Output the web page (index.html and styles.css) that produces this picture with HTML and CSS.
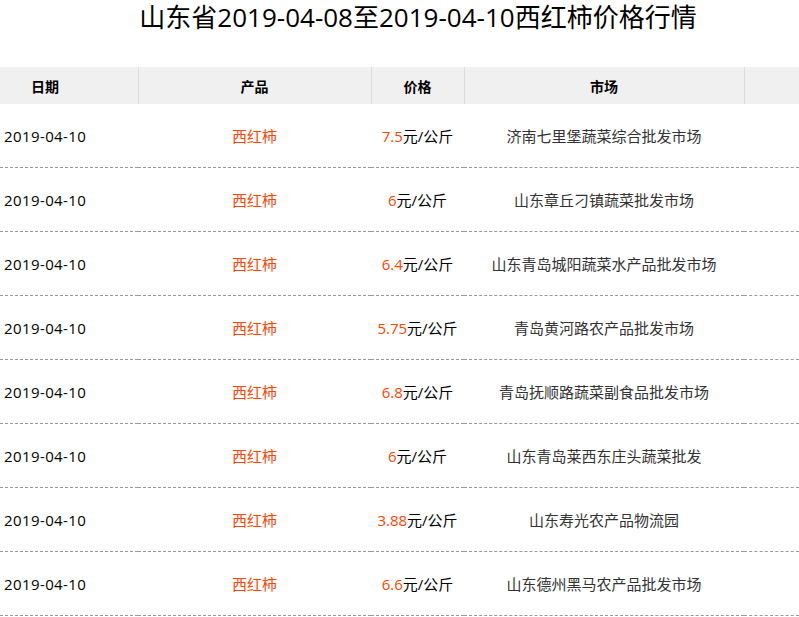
FILE: index.html
```html
<!DOCTYPE html>
<html lang="zh-CN">
<head>
<meta charset="utf-8">
<title>山东省西红柿价格行情</title>
<link rel="stylesheet" href="styles.css">
</head>
<body>
<h1 class="title">山东省2019-04-08至2019-04-10西红柿价格行情</h1>
<table class="price-table">
  <colgroup>
    <col class="c-date"><col class="c-prod"><col class="c-price"><col class="c-market"><col class="c-extra">
  </colgroup>
  <thead>
    <tr>
      <th class="th-date">日期</th>
      <th>产品</th>
      <th>价格</th>
      <th>市场</th>
      <th></th>
    </tr>
  </thead>
  <tbody>
    <tr><td class="date">2019-04-10</td><td class="prod">西红柿</td><td class="price"><span class="num">7.5</span>元/公斤</td><td class="market">济南七里堡蔬菜综合批发市场</td><td></td></tr>
    <tr><td class="date">2019-04-10</td><td class="prod">西红柿</td><td class="price"><span class="num">6</span>元/公斤</td><td class="market">山东章丘刁镇蔬菜批发市场</td><td></td></tr>
    <tr><td class="date">2019-04-10</td><td class="prod">西红柿</td><td class="price"><span class="num">6.4</span>元/公斤</td><td class="market">山东青岛城阳蔬菜水产品批发市场</td><td></td></tr>
    <tr><td class="date">2019-04-10</td><td class="prod">西红柿</td><td class="price"><span class="num">5.75</span>元/公斤</td><td class="market">青岛黄河路农产品批发市场</td><td></td></tr>
    <tr><td class="date">2019-04-10</td><td class="prod">西红柿</td><td class="price"><span class="num">6.8</span>元/公斤</td><td class="market">青岛抚顺路蔬菜副食品批发市场</td><td></td></tr>
    <tr><td class="date">2019-04-10</td><td class="prod">西红柿</td><td class="price"><span class="num">6</span>元/公斤</td><td class="market">山东青岛莱西东庄头蔬菜批发</td><td></td></tr>
    <tr><td class="date">2019-04-10</td><td class="prod">西红柿</td><td class="price"><span class="num">3.88</span>元/公斤</td><td class="market">山东寿光农产品物流园</td><td></td></tr>
    <tr><td class="date">2019-04-10</td><td class="prod">西红柿</td><td class="price"><span class="num">6.6</span>元/公斤</td><td class="market">山东德州黑马农产品批发市场</td><td></td></tr>
  </tbody>
</table>
</body>
</html>
```
FILE: styles.css
```css
html, body {
  margin: 0;
  padding: 0;
  background: #fff;
  font-family: "Open Sans", "Noto Sans CJK SC", sans-serif;
  color: #000;
}
.title {
  margin: 0;
  height: 67px;
  line-height: 34px;
  font-size: 26px;
  font-weight: normal;
  text-align: center;
  padding-left: 37px;
  color: #000;
}
.price-table {
  width: 100%;
  border-collapse: collapse;
  table-layout: fixed;
}
.c-date { width: 138px; }
.c-prod { width: 233px; }
.c-price { width: 93px; }
.c-market { width: 280px; }
.price-table th {
  background: #f0f0f0;
  height: 37px;
  padding: 0;
  font-size: 14px;
  font-weight: bold;
  text-align: center;
  border-left: 1px solid #dcdcdc;
  color: #000;
}
.price-table th:first-child { border-left: none; }
.price-table th.th-date {
  text-align: left;
  padding-left: 31px;
}
.price-table td {
  height: 63px;
  padding: 0;
  font-size: 15px;
  text-align: center;
  border-bottom: 1px dashed #9a9a9a;
  white-space: nowrap;
}
.price-table td.date {
  text-align: left;
  padding-left: 4px;
  letter-spacing: 0.4px;
  color: #000;
}
.prod { color: #ff4400; }
.price { color: #000; }
.num { color: #ff4400; }
.market { color: #333; }
```
